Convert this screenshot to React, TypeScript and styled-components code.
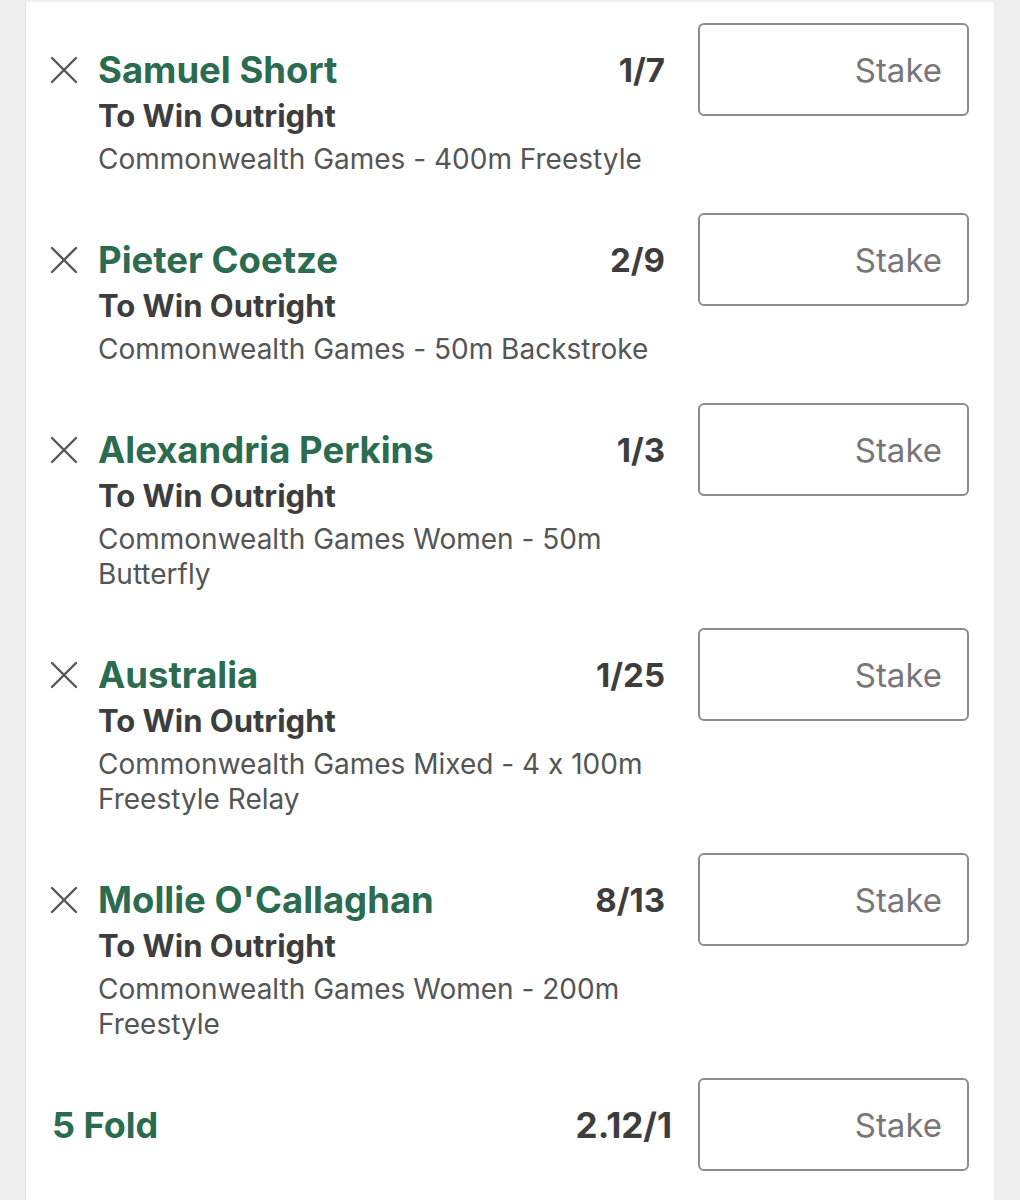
import React from "react";
import styled, { createGlobalStyle } from "styled-components";

const GlobalStyle = createGlobalStyle`
    body {
        margin: 0;
        background: #efefef;
        font-family: Inter, "Noto Sans", sans-serif;
        font-feature-settings: "calt" 0;
    }
`;

const Slip = styled.div`
    margin: 2px 0 0 25px;
    width: 970px;
    min-height: 1198px;
    box-sizing: border-box;
    background: #fff;
    border-left: 1px solid #e3e3e3;
    border-right: 1px solid #e8e8e8;
    padding: 21px 25px 0 24px;
`;

const Selection = styled.div`
    display: flex;
    align-items: flex-start;
    margin-bottom: 36px;
`;

const RemoveButton = styled.button`
    flex: 0 0 48px;
    height: 28px;
    margin-top: 33px;
    padding: 0;
    border: 0;
    background: none;
    display: flex;
    align-items: center;
    justify-content: flex-start;
    cursor: pointer;
`;

const Details = styled.div`
    flex: 1;
    min-width: 0;
    padding-top: 24px;
`;

const TitleLine = styled.div`
    display: flex;
    justify-content: space-between;
    align-items: center;
    height: 46px;
`;

const Runner = styled.div`
    font-size: 36.5px;
    font-weight: 700;
    color: #2b6b4f;
`;

const Odds = styled.div`
    font-size: 33px;
    font-weight: 700;
    color: #3d3d3d;
    font-feature-settings: "calt" 0, "tnum" 0;
`;

const Market = styled.div`
    font-size: 31px;
    font-weight: 700;
    color: #3d3d3d;
    line-height: 46px;
`;

const Event = styled.div`
    margin-top: 3px;
    font-size: 28px;
    line-height: 35px;
    color: #555;
`;

const StakeInput = styled.input<{ $gap?: number }>`
    flex: 0 0 271px;
    width: 271px;
    height: 93px;
    box-sizing: border-box;
    margin-left: ${(p) => p.$gap ?? 33}px;
    border: 2px solid #8c8c8c;
    border-radius: 6px;
    padding: 0 25px;
    font-family: inherit;
    font-size: 33px;
    text-align: right;
    color: #333;
    outline: none;
    &::placeholder {
        color: #777;
    }
`;

const FoldRow = styled.div`
    display: flex;
    align-items: center;
    padding-left: 2px;
`;

const FoldLabel = styled.div`
    flex: 1;
    font-size: 36px;
    font-weight: 700;
    color: #2b6b4f;
`;

const FoldOdds = styled(Odds)`
    font-size: 35px;
`;

const CloseIcon = () => (
    <svg width="28" height="28" viewBox="0 0 28 28">
        <path d="M2 2 L26 26 M26 2 L2 26" stroke="#555" strokeWidth="2.4" strokeLinecap="round" />
    </svg>
);

type Bet = { runner: string; odds: string; event: string };

const bets: Bet[] = [
    { runner: "Samuel Short", odds: "1/7", event: "Commonwealth Games - 400m Freestyle" },
    { runner: "Pieter Coetze", odds: "2/9", event: "Commonwealth Games - 50m Backstroke" },
    { runner: "Alexandria Perkins", odds: "1/3", event: "Commonwealth Games Women - 50m Butterfly" },
    { runner: "Australia", odds: "1/25", event: "Commonwealth Games Mixed - 4 x 100m Freestyle Relay" },
    { runner: "Mollie O'Callaghan", odds: "8/13", event: "Commonwealth Games Women - 200m Freestyle" },
];

const App = () => {
    return (
        <>
            <GlobalStyle />
            <Slip>
                {bets.map((bet) => (
                    <Selection key={bet.runner}>
                        <RemoveButton aria-label="Remove selection">
                            <CloseIcon />
                        </RemoveButton>
                        <Details>
                            <TitleLine>
                                <Runner>{bet.runner}</Runner>
                                <Odds>{bet.odds}</Odds>
                            </TitleLine>
                            <Market>To Win Outright</Market>
                            <Event>{bet.event}</Event>
                        </Details>
                        <StakeInput placeholder="Stake" />
                    </Selection>
                ))}
                <FoldRow>
                    <FoldLabel>5 Fold</FoldLabel>
                    <FoldOdds>2.12/1</FoldOdds>
                    <StakeInput placeholder="Stake" $gap={26} />
                </FoldRow>
            </Slip>
        </>
    );
};

export default App;
